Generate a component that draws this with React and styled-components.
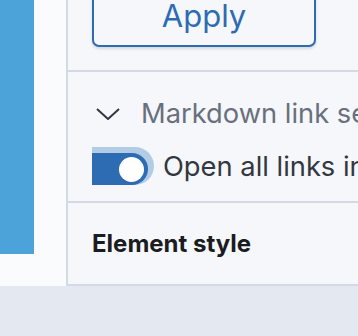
import styled, { createGlobalStyle } from "styled-components";

const GlobalStyle = createGlobalStyle`
  html, body {
    margin: 0;
    padding: 0;
    background: #e4e8f0;
    font-family: Inter, "Noto Sans", sans-serif;
  }
`;

const Page = styled.div`
  width: 358px;
  height: 336px;
  overflow: hidden;
`;

const Top = styled.div`
  display: flex;
  height: 286px;
`;

const Nav = styled.div`
  width: 66px;
  flex-shrink: 0;
  background: #fafbfd;
`;

const NavBar = styled.div`
  width: 34px;
  height: 254px;
  background: #4ba3da;
`;

const Panel = styled.div`
  flex: 1;
  min-width: 0;
  background: #f5f7fa;
  border-left: 2px solid #d3dae6;
  border-bottom: 2px solid #d3dae6;
  overflow: hidden;
  display: flex;
  flex-direction: column;
`;

const Section = styled.div`
  padding: ${(p) => p.$pad};
  border-bottom: ${(p) => (p.$last ? "none" : "2px solid #d3dae6")};
  display: flex;
  flex-direction: column;
  white-space: nowrap;
`;

const ApplyButton = styled.button`
  margin-top: -17px;
  width: 224px;
  height: 64px;
  box-sizing: border-box;
  border: 2px solid #2d6cb3;
  border-radius: 7px;
  background: #f5f7fa;
  box-shadow: 0 2px 3px rgba(0, 0, 0, 0.12);
  color: #2d6cb3;
  font-family: inherit;
  font-size: 31px;
  font-weight: 400;
  padding: 0;
`;

const Row = styled.div`
  display: flex;
  align-items: center;
  height: ${(p) => p.$h}px;
  margin-top: ${(p) => p.$top || 0}px;
  margin-left: ${(p) => p.$left || 0}px;
`;

const Chevron = styled.svg`
  width: 24px;
  height: 12px;
  flex-shrink: 0;
  margin-left: -20px;
  margin-right: 21px;
`;

const Caption = styled.span`
  font-size: 27.3px;
  line-height: 34px;
  color: ${(p) => p.$color};
`;

const SwitchClip = styled.div`
  width: 62px;
  height: 39px;
  box-sizing: border-box;
  padding-top: 6px;
  overflow: hidden;
  flex-shrink: 0;
  margin-right: 9px;
`;

const Pill = styled.div`
  margin-left: -20px;
  width: 76px;
  height: 32px;
  border-radius: 16px;
  background: #2d6bb2;
  box-shadow: 3px -3px 0 3px #b3cce5;
  display: flex;
  align-items: center;
  justify-content: flex-end;
  padding-right: 4px;
  box-sizing: border-box;
`;

const Knob = styled.div`
  width: 25px;
  height: 25px;
  border-radius: 50%;
  background: #ffffff;
`;

const Title = styled.h3`
  margin: 0;
  font-size: 24px;
  line-height: 29px;
  font-weight: 700;
  color: #1a1c21;
`;

export default function App() {
  return (
    <Page>
      <GlobalStyle />
      <Top>
        <Nav>
          <NavBar />
        </Nav>
        <Panel>
          <Section $pad="0 0 23px 24px">
            <ApplyButton>Apply</ApplyButton>
          </Section>
          <Section $pad="25px 0 15px 48px">
            <Row $h={34}>
              <Chevron viewBox="0 0 24 12">
                <polyline
                  points="1,1 12,11 23,1"
                  fill="none"
                  stroke="#343741"
                  strokeWidth="2"
                />
              </Chevron>
              <Caption $color="#69707d">Markdown link settings</Caption>
            </Row>
            <Row $h={39} $top={16} $left={-24}>
              <SwitchClip>
                <Pill>
                  <Knob />
                </Pill>
              </SwitchClip>
              <Caption $color="#343741">Open all links in a new tab</Caption>
            </Row>
          </Section>
          <Section $pad="26px 0 0 24px" $last>
            <Title>Element style</Title>
          </Section>
        </Panel>
      </Top>
    </Page>
  );
}
